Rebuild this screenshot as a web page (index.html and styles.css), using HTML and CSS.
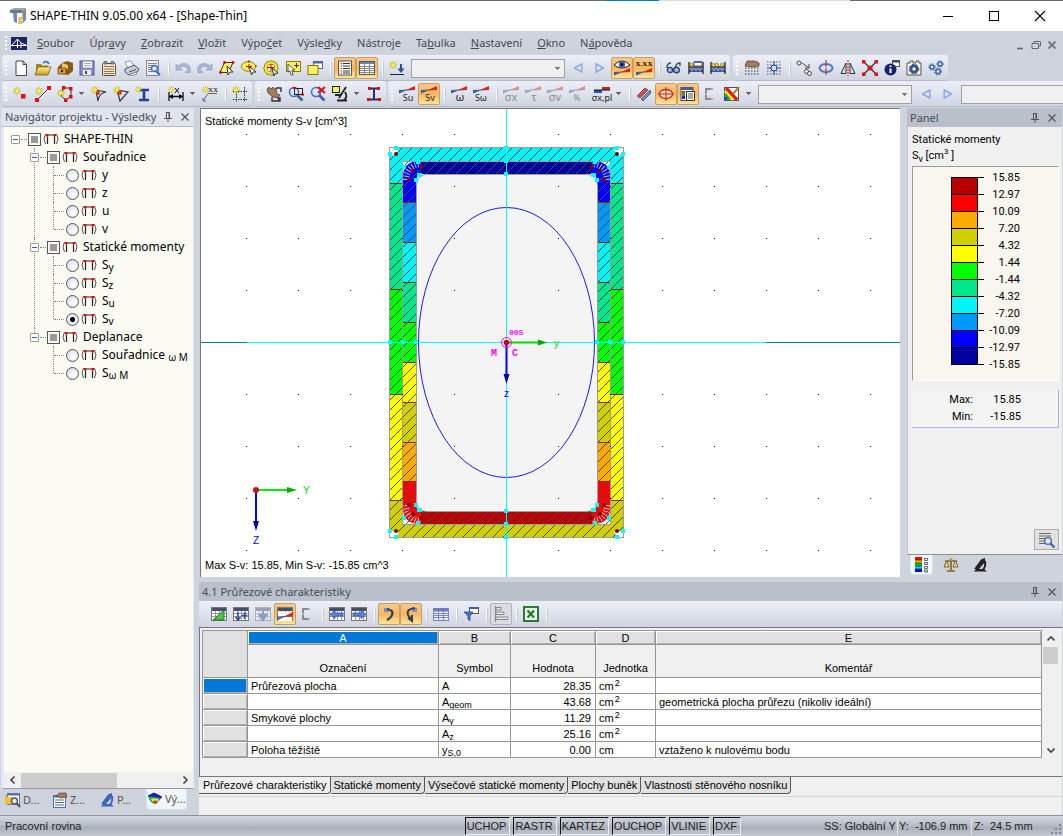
FILE: index.html
```html
<!DOCTYPE html>
<html lang="cs">
<head>
<meta charset="utf-8">
<title>SHAPE-THIN 9.05.00 x64 - [Shape-Thin]</title>
<link rel="stylesheet" href="styles.css">
</head>
<body>
<svg class="sprite" aria-hidden="true">
  <defs>
    <linearGradient id="gFold" x1="0" x2="0" y1="0" y2="1"><stop offset="0" stop-color="#fff29a"/><stop offset="1" stop-color="#c79a1e"/></linearGradient>
  </defs>
  <symbol id="star" viewBox="0 0 8 8"><path d="M4 0V8M0 4H8M1 1L7 7M7 1L1 7" stroke="#c8b400" stroke-width="1"/><circle cx="4" cy="4" r="1.8" fill="#fff645"/></symbol>
  <symbol id="wedge" viewBox="0 0 16 8" preserveAspectRatio="none"><path d="M0 4.500L16 3.500" stroke="#555"/><path d="M0 7.500V5L8 4.200Z" fill="#2a5cc0"/><path d="M7 4L16 0V4Z" fill="#d4281c"/></symbol>
  <symbol id="sect" viewBox="0 0 16 12"><path d="M2.500 1Q-.5 6 2.500 11M13.500 1Q16.500 6 13.500 11" fill="none" stroke="#555"/><path d="M4.500 11V3.500M11.500 11V3.500M5 2H11" fill="none" stroke="#222" stroke-width="1.200"/><rect x="3" y="1" width="2.400" height="2.400" fill="#e00"/><rect x="10.600" y="1" width="2.400" height="2.400" fill="#e00"/></symbol>
  <symbol id="lens" viewBox="0 0 16 16"><path d="M9 9L14.500 14.500" stroke="#3c5fa8" stroke-width="2.600"/><circle cx="6" cy="6" r="4.500" fill="#dbe8fb" stroke="#4a6fb8" stroke-width="1.600"/></symbol>
  <symbol id="sheet" viewBox="0 0 16 16"><rect x=".5" y="1.500" width="15" height="13" fill="#fff" stroke="#777"/><path d="M1 3.500H15" stroke="#46506c" stroke-width="3"/><path d="M1 7.500H15M1 10.500H15M4.500 5V14M8.500 5V14M12.500 5V14" stroke="#999"/></symbol>
  <symbol id="prev" viewBox="0 0 16 16"><path d="M12 3.500V12.500L4 8Z" fill="#a9c0ee" stroke="#7d9ce0"/><path d="M11 6V10L7 8Z" fill="#e6eefc"/></symbol>
  <symbol id="next" viewBox="0 0 16 16"><path d="M4 3.500V12.500L12 8Z" fill="#a9c0ee" stroke="#7d9ce0"/><path d="M5 6V10L9 8Z" fill="#e6eefc"/></symbol>
  <symbol id="pin" viewBox="0 0 8 10"><path d="M2.500 1V6M5.500 1V6M2 .5H6M0 6.500H8M4 7V10" fill="none" stroke="#555"/><path d="M5 1V6" stroke="#555"/></symbol>
  <symbol id="cross" viewBox="0 0 10 10"><path d="M1.500 1.500L8.500 8.500M8.500 1.500L1.500 8.500" stroke="#555" stroke-width="1.200"/></symbol>
  <symbol id="abacus" viewBox="0 0 16 16"><path d="M1 2V14M15 2V14M1 7H15M1 11H15" stroke="#222" stroke-width="1.300"/><g fill="#e7cf57" stroke="#826c1c" stroke-width=".6"><circle cx="3.500" cy="5" r="1.700"/><circle cx="7" cy="5" r="1.700"/><circle cx="12" cy="5" r="1.700"/></g><g fill="#7a97d6" stroke="#24458c" stroke-width=".6"><circle cx="4" cy="10" r="1.800"/><circle cx="8" cy="10" r="1.800"/><circle cx="12" cy="10" r="1.800"/></g></symbol>
  <symbol id="scope" viewBox="0 0 16 16"><path d="M2 14.500H15L12 12H4Z"/><path d="M2 12L9 2.500L13 1V5L7 12Z"/><path d="M13 4Q14 9 11 13" fill="none" stroke="currentColor" stroke-width="2"/></symbol>
  <symbol id="brac" viewBox="0 0 16 16"><path d="M11 3H4V13H11" fill="none" stroke="#8b8b8b" stroke-width="2"/><path d="M9 3H11M9 13H11M4 7V9" stroke="#d8dbe4" stroke-width="1"/></symbol>
</svg>

<header class="titlebar">
  <svg class="app-icon" viewBox="0 0 18 18"><path d="M1 3L5 1H17L13 4V6H1Z" fill="#9fa6ae"/><path d="M1 3H13V6H1Z" fill="#6f7780"/><path d="M4 6H8V16L5 15Z" fill="#7088c0"/><path d="M13 4L17 1V13L14 16Z" fill="#858c94"/><text x="9" y="15" class="icon-g">g</text></svg>
  <h1>SHAPE-THIN 9.05.00 x64 - [Shape-Thin]</h1>
  <div class="winbtns">
    <button aria-label="Minimalizovat"><svg viewBox="0 0 12 12"><path d="M1 6.500H11" stroke="#000"/></svg></button>
    <button aria-label="Maximalizovat"><svg viewBox="0 0 12 12"><rect x="1.500" y="1.500" width="9" height="9" fill="none" stroke="#000"/></svg></button>
    <button aria-label="Zavřít"><svg viewBox="0 0 12 12"><path d="M1 1L11 11M11 1L1 11" stroke="#000" stroke-width="1.100"/></svg></button>
  </div>
</header>

<nav class="menubar">
  <span class="grip"></span>
  <svg class="bridge" viewBox="0 0 16 13"><rect width="16" height="13" fill="#1b2560"/><path d="M0 8.500H16M6.500 2V11M6.500 2L1 8M6.500 2L10 6V11M10 6L15 8" stroke="#fff" fill="none"/></svg>
  <div class="menus">
    <button><u>S</u>oubor</button><button>Úpr<u>a</u>vy</button><button><u>Z</u>obrazit</button><button><u>V</u>ložit</button><button>Výpo<u>č</u>et</button><button>Výsle<u>d</u>ky</button><button>Nástro<u>j</u>e</button><button>Ta<u>b</u>ulka</button><button><u>N</u>astavení</button><button><u>O</u>kno</button><button>N<u>á</u>pověda</button>
  </div>
  <div class="mdi">
    <button aria-label="Minimalizovat okno"><svg viewBox="0 0 10 10"><path d="M2 8.500H8" stroke="#666" stroke-width="1.600"/></svg></button>
    <button aria-label="Obnovit okno"><svg viewBox="0 0 10 10"><path d="M3 3V1.500H9.500V6H8M1 3.500H7.500V8.500H1Z" fill="none" stroke="#666"/></svg></button>
    <button aria-label="Zavřít okno"><svg viewBox="0 0 10 10"><path d="M1.500 1.500L8.500 8.500M8.500 1.500L1.500 8.500" stroke="#777" stroke-width="1.800"/></svg></button>
  </div>
</nav>

<div class="toolrow">
  <div class="toolbar">
    <span class="grip"></span>
    <button class="tb" aria-label="Nový"><svg viewBox="0 0 16 16"><path d="M3 1H10L13.500 4.500V15.500H3Z" fill="#fff" stroke="#444"/><path d="M10 1V4.500H13.500" fill="none" stroke="#444"/></svg></button>
    <button class="tb" aria-label="Otevřít"><svg viewBox="0 0 16 16"><path d="M1 4H6L7 5.500H13V14H1Z" fill="#a98618"/><path d="M3 7H16L13 15H0Z" fill="url(#gFold)" stroke="#6b540e" stroke-width=".7"/><path d="M8 3Q12 0 14 4" fill="none" stroke="#4a7bc0" stroke-width="1.800"/></svg></button>
    <button class="tb" aria-label="Správce"><svg viewBox="0 0 16 16"><path d="M5 3L10 1L16 3V11L11 15L1 13V7Z" fill="#8a5a14"/><path d="M5 3L11 5V9H5Z" fill="#f3c76a"/><path d="M1 8H9V14H1Z" fill="#dc9d35" stroke="#54350a" stroke-width=".7"/><circle cx="5" cy="11" r="1.200" fill="#222"/></svg></button>
    <button class="tb" aria-label="Uložit"><svg viewBox="0 0 16 16"><rect x="1" y="1" width="14" height="14" fill="#8c8ccf" stroke="#50508c"/><rect x="4" y="1.500" width="9" height="6" fill="#fff"/><path d="M5 3.500H12M5 5.500H12" stroke="#aaa"/><rect x="4" y="10" width="8" height="5" fill="#eee"/><rect x="6" y="11" width="2" height="3" fill="#446"/></svg></button>
    <button class="tb" aria-label="Protokol"><svg viewBox="0 0 16 16"><rect x="1.500" y="3.500" width="13" height="12" rx="1" fill="#f5e3c8" stroke="#5a4c3a"/><path d="M3 1.500H6V4H3ZM10 1.500H13V4H10Z" fill="#999" stroke="#444" stroke-width=".6"/><path d="M3 6.500H13M3 9H13M3 11.500H13M3 13.500H13" stroke="#8d7458"/></svg></button>
    <button class="tb" aria-label="Tisk"><svg viewBox="0 0 16 16"><path d="M2 2L8 1L11 6L5 8Z" fill="#fff" stroke="#777" stroke-width=".7"/><path d="M2 9L11 5L16 9L14 12L6 15L2 12Z" fill="#c9ccdc" stroke="#333" stroke-width=".8"/><path d="M6 12L13 9.500" stroke="#555"/><path d="M7 14.500L13 12L14 14L9 15.500Z" fill="#fff" stroke="#555" stroke-width=".6"/></svg></button>
    <button class="tb" aria-label="Náhled"><svg viewBox="0 0 16 16"><rect x="1.500" y=".5" width="12" height="15" fill="#eceef4" stroke="#888"/><path d="M3 3.500H12M3 5.500H8M3 7.500H6M3 9.500H6M3 11.500H7" stroke="#888"/><path d="M11.500 11.500L15 15" stroke="#3d69b6" stroke-width="2"/><circle cx="9.500" cy="8.500" r="3" fill="#d8e8fb" stroke="#3d69b6" stroke-width="1.300"/></svg></button>
    <span class="sep"></span>
    <button class="tb" aria-label="Zpět"><svg viewBox="0 0 16 16"><path d="M1 4V10H7L4.500 8Q9 4 13 9Q12 12 10 12.500H15Q17 4 9 3.500Q5 3.500 3 6Z" fill="#a9b8d8" stroke="#8094c0" stroke-width=".6"/></svg></button>
    <button class="tb" aria-label="Znovu"><svg viewBox="0 0 16 16"><path d="M15 4V10H9L11.500 8Q7 4 3 9Q4 12 6 12.500H1Q-1 4 7 3.500Q11 3.500 13 6Z" fill="#a9b8d8" stroke="#8094c0" stroke-width=".6"/></svg></button>
    <button class="tb" aria-label="Výběr rovnoběžníkem"><svg viewBox="0 0 16 16"><path d="M5.500 2.500H14L9.500 12.500H1Z" fill="#fcf25c" stroke="#333"/><path d="M8 6L14 12L11 12L9 15Z" fill="#fff" stroke="#333"/><g fill="#d00"><circle cx="5.500" cy="2.500" r="1.400"/><circle cx="14" cy="2.500" r="1.400"/><circle cx="1.500" cy="12.500" r="1.400"/></g></svg></button>
    <button class="tb" aria-label="Výběr elipsou"><svg viewBox="0 0 16 16"><ellipse cx="7.500" cy="6.500" rx="7" ry="4.800" fill="#fcf25c" stroke="#8a7a00"/><path d="M8 6L15 12L12 12L10.500 15Z" fill="#fff" stroke="#333"/><path d="M8 0V3M8 4V9M5 6.500H11M14 6H16" stroke="#c00"/></svg></button>
    <button class="tb" aria-label="Výběr prstencem"><svg viewBox="0 0 16 16"><circle cx="8" cy="8" r="5.500" fill="#fff" stroke="#7a6d00" stroke-width="4"/><circle cx="8" cy="8" r="5.500" fill="none" stroke="#fbe82c" stroke-width="2.600"/><path d="M8 4V11M4.500 7.500H11" stroke="#c00"/><path d="M9 8L15 13L12 13.500L11 16Z" fill="#fff" stroke="#333"/></svg></button>
    <button class="tb" aria-label="Přidat k výběru"><svg viewBox="0 0 16 16"><rect x="1.500" y="1.500" width="14" height="10" fill="#fcf25c" stroke="#8a7a00"/><path d="M9 5.500H14M11.500 3V8" stroke="#333"/><path d="M3 4L10 10H7L8 15L6 15L5 11L3 12Z" fill="#fff" stroke="#333" stroke-width=".8"/></svg></button>
    <button class="tb" aria-label="Okno výběru"><svg viewBox="0 0 16 16"><rect x="6.500" y="1.500" width="9" height="7" fill="#fff" stroke="#667"/><path d="M6 2.500H16" stroke="#4a67a8" stroke-width="2"/><rect x="1" y="5.500" width="10" height="9" fill="#fcf25c" stroke="#8a7a00"/></svg></button>
    <span class="sep"></span>
    <button class="tb on" aria-label="Navigátor"><svg viewBox="0 0 16 16"><rect x="1.500" y="1" width="13" height="14" fill="#fff" stroke="#555"/><path d="M3.500 3.500H5M3.500 6H5M3.500 8.500H5M3.500 11H5M3.500 13H5" stroke="#c33"/><path d="M6 3.500H13M6 6H13M6 8.500H13M6 11H13M6 13H13" stroke="#333"/></svg></button>
    <button class="tb on" aria-label="Tabulky"><svg viewBox="0 0 16 16"><rect x=".5" y="1.500" width="15" height="13" fill="#fff" stroke="#555"/><path d="M1 3H15" stroke="#6c83b8" stroke-width="2"/><path d="M1 6.500H15M1 8.500H15M1 10.500H15M1 12.500H15M5.500 4V14M10.500 4V14" stroke="#888"/></svg></button>
    <span class="sep"></span>
    <button class="tb" aria-label="Zatížení"><svg viewBox="0 0 16 16"><use href="#star" x="0" y="1" width="8" height="8"/><path d="M12 4V11" stroke="#2d4f9e" stroke-width="2"/><path d="M8.500 8.500L12 13L15.500 8.500Z" fill="#2d4f9e"/><path d="M1 14.500H15" stroke="#222"/></svg></button>
    <select class="combo c1" aria-label="Zatěžovací stav"><option></option></select>
    <button class="tb" aria-label="Předchozí"><svg><use href="#prev"/></svg></button>
    <button class="tb" aria-label="Další"><svg><use href="#next"/></svg></button>
    <button class="tb on" aria-label="Zobrazit výsledky"><svg viewBox="0 0 16 16"><use href="#wedge" x="0" y="8" width="16" height="8"/><path d="M0 5Q8 -3 16 5Q8 11 0 5Z" fill="#fff" stroke="#222"/><circle cx="8" cy="4.500" r="3.200" fill="#3463b4"/><circle cx="8" cy="4.500" r="1.300"/></svg></button>
    <button class="tb on" aria-label="Zobrazit hodnoty"><svg viewBox="0 0 16 16"><text x="8" y="6" class="xxx">X.XX</text><use href="#wedge" x="0" y="8" width="16" height="8"/></svg></button>
    <span class="sep"></span>
    <button class="tb" aria-label="Brýle"><svg viewBox="0 0 16 16"><path d="M1 8Q1 3 5 3M9 8Q10 3 14 3V6" fill="none" stroke="#355" stroke-width="1.400"/><circle cx="4" cy="10" r="2.600" fill="#a9bde6" stroke="#2c3e70" stroke-width="1.400"/><circle cx="10.500" cy="10" r="2.800" fill="#a9bde6" stroke="#2c3e70" stroke-width="1.400"/></svg></button>
    <button class="tb" aria-label="Výpočet po oknech"><svg><use href="#abacus"/><path d="M6 1.500H14V6H6Z" fill="#fff" stroke="#555"/><path d="M6 2H14" stroke="#4a67a8" stroke-width="2"/></svg></button>
    <button class="tb" aria-label="Spočítat"><svg><use href="#abacus"/></svg></button>
  </div>
  <div class="toolbar">
    <span class="grip"></span>
    <button class="tb" aria-label="Rastr"><svg viewBox="0 0 16 16"><path d="M1 5H15M1 8H15M1 11H15M1 14H15" stroke="#333" stroke-dasharray="1.500 1.500"/><path d="M1 6L3 1H11L15 3V6L10 7Z" fill="#a77b5c" stroke="#4f3423" stroke-width=".7"/></svg></button>
    <button class="tb" aria-label="Uchopení"><svg viewBox="0 0 16 16"><path d="M1 2H15M1 5H15M1 11H15M1 14H15" stroke="#555" stroke-dasharray="1.500 1.500"/><path d="M8 1V15M1 8H15" stroke="#2038b0"/><circle cx="8" cy="8" r="3" fill="#cfe0ff" stroke="#2038b0"/></svg></button>
    <span class="sep"></span>
    <button class="tb" aria-label="Posun"><svg viewBox="0 0 16 16"><circle cx="3" cy="3" r="2" fill="#fff" stroke="#444"/><path d="M6 3L13 8M13 4V8H9" fill="none" stroke="#444"/><circle cx="10.500" cy="11.500" r="2" fill="#fff" stroke="#444"/><circle cx="13.500" cy="13.500" r="2" fill="#fff" stroke="#444"/></svg></button>
    <button class="tb" aria-label="Otočení"><svg viewBox="0 0 16 16"><ellipse cx="8" cy="8" rx="6.500" ry="4" fill="none" stroke="#5278c4" stroke-width="2"/><path d="M8 0V16" stroke="#c00" stroke-dasharray="3 1"/></svg></button>
    <button class="tb" aria-label="Zrcadlení"><svg viewBox="0 0 16 16"><path d="M6 3V13.500H1ZM10 3V13.500H15Z" fill="#ddd" stroke="#333"/><path d="M8 0V16" stroke="#c00" stroke-dasharray="2 1"/></svg></button>
    <button class="tb" aria-label="Průsečík"><svg viewBox="0 0 16 16"><path d="M2 2L14 14M14 2L2 14" stroke="#333" stroke-width="1.400"/><g fill="#d8141c"><rect x="0" y="0" width="3.500" height="3.500"/><rect x="12.500" y="0" width="3.500" height="3.500"/><rect x="0" y="12.500" width="3.500" height="3.500"/><rect x="12.500" y="12.500" width="3.500" height="3.500"/><circle cx="8" cy="8" r="2.600"/></g></svg></button>
    <button class="tb" aria-label="Informace"><svg viewBox="0 0 16 16"><rect x="8.500" y=".5" width="7" height="6" fill="#fff" stroke="#556"/><path d="M8 1.500H16" stroke="#445" stroke-width="2"/><circle cx="6.500" cy="9.500" r="6" fill="#19216e"/><path d="M6.500 5.500V7M6.500 8.500V13" stroke="#fff" stroke-width="2"/></svg></button>
    <button class="tb" aria-label="Nastavení zobrazení"><svg viewBox="0 0 16 16"><path d="M1 3H4V1H7V3H10V1H13V3H15V15H1Z" fill="#fbf3e4" stroke="#554"/><circle cx="8" cy="9" r="3.200" fill="none" stroke="#34558f" stroke-width="3"/><circle cx="8" cy="9" r="4.800" fill="none" stroke="#34558f" stroke-dasharray="2 2"/></svg></button>
    <button class="tb" aria-label="Možnosti"><svg viewBox="0 0 16 16"><g fill="#dfe9fb" stroke="#41639f" stroke-width="1.500"><circle cx="4" cy="7" r="2"/><circle cx="12" cy="4" r="2"/><circle cx="10" cy="11.500" r="2.200"/></g><g fill="none" stroke="#41639f" stroke-dasharray="1.500 1.500"><circle cx="4" cy="7" r="3.300"/><circle cx="12" cy="4" r="3.200"/><circle cx="10" cy="11.500" r="3.600"/></g></svg></button>
  </div>
</div>

<div class="toolrow">
  <div class="toolbar">
    <span class="grip"></span>
    <button class="tb" aria-label="Nový uzel"><svg viewBox="0 0 16 16"><use href="#star" x="0" y="1" width="8" height="8"/><rect x="8" y="8" width="4.500" height="4.500" fill="#e01010"/></svg></button>
    <button class="tb" aria-label="Nová linie"><svg viewBox="0 0 16 16"><path d="M2 14L14 2" stroke="#333"/><rect x="0" y="12" width="4" height="4" fill="#e01010"/><rect x="12" y="0" width="4" height="4" fill="#e01010"/><use href="#star" x="0" y="1" width="8" height="8"/></svg></button>
    <button class="tb" aria-label="Nový prvek"><svg viewBox="0 0 16 16"><path d="M6 2H14V10L9 14L4 10Z" fill="none" stroke="#333"/><g fill="#e01010"><rect x="5" y="0" width="3.500" height="3.500"/><rect x="12" y="1" width="3.500" height="3.500"/><rect x="12" y="9" width="3.500" height="3.500"/><rect x="7" y="12.500" width="3.500" height="3.500"/></g><use href="#star" x="0" y="3" width="8" height="8"/></svg></button>
    <span class="dd"></span>
    <button class="tb" aria-label="Zaoblení"><svg viewBox="0 0 16 16"><path d="M5 4L15 6Q8 7 7 15Z" fill="none" stroke="#333" stroke-width="1.200"/><rect x="5" y="5" width="3.500" height="3.500" fill="#e01010"/><use href="#star" x="0" y="0" width="8" height="8"/></svg></button>
    <button class="tb" aria-label="Zkosení"><svg viewBox="0 0 16 16"><path d="M4 4L15 6L7 15Z" fill="none" stroke="#333" stroke-width="1.200"/><rect x="5" y="5" width="3.500" height="3.500" fill="#e01010"/><use href="#star" x="0" y="0" width="8" height="8"/></svg></button>
    <button class="tb" aria-label="Nový průřez"><svg viewBox="0 0 16 16"><path d="M4 4H14M4 14H14M9 4V14" stroke="#1d3f9e" stroke-width="2.600"/><use href="#star" x="0" y="0" width="7" height="7"/></svg></button>
    <span class="sep"></span>
    <button class="tb gap" aria-label="Kóty"><svg viewBox="0 0 16 16"><path d="M1 6V15M15 6V15M1 10.500H15" stroke="#111" stroke-width="1.300"/><path d="M1 10.500L5 8V13ZM15 10.500L11 8V13Z"/><path d="M7 2L11 7M11 2L7 7" stroke="#111"/><use href="#star" x="0" y="0" width="7" height="7"/></svg></button>
    <span class="dd"></span>
    <button class="tb" aria-label="Komentář"><svg viewBox="0 0 16 16"><path d="M15 7.500H6L1 15M1 12V15H4" fill="none" stroke="#666"/><text x="11" y="6" class="xx">XX</text><use href="#star" x="0" y="0" width="7" height="7"/></svg></button>
    <span class="sep"></span>
    <button class="tb" aria-label="Pomocná síť"><svg viewBox="0 0 16 16"><path d="M4.500 3V16M12.500 1V16M1 5.500H16M1 13.500H16" stroke="#333" stroke-dasharray="1.500 1"/><use href="#star" x="0" y="0" width="8" height="8"/></svg></button>
  </div>
  <div class="toolbar">
    <span class="grip"></span>
    <button class="tb" aria-label="Posunout pohled"><svg viewBox="0 0 16 16"><path d="M10 2H15V6M6 11V15H14V11M10 9L14 15" fill="none" stroke="#333" stroke-width="1.400"/><path d="M1 3L3 1L5 3L7 1L8 3L10 2L11 8L14 9L12 12L7 11L2 7Z" fill="#a27b60" stroke="#4b3526" stroke-width=".7"/></svg></button>
    <button class="tb" aria-label="Zvětšit oknem"><svg viewBox="0 0 16 16"><use href="#lens" width="16" height="16"/><rect x="6.500" y="2.500" width="8" height="6" fill="none" stroke="#222"/><path d="M5 2H8M13 8.500H16" stroke="#c00" stroke-width="2"/></svg></button>
    <button class="tb" aria-label="Původní pohled"><svg viewBox="0 0 16 16"><use href="#lens" width="16" height="16"/><path d="M8 1L15 7M15 1L8 7" stroke="#d01818" stroke-width="2.200"/></svg></button>
    <button class="tb" aria-label="Vykreslení"><svg viewBox="0 0 16 16"><rect x=".5" y=".5" width="7" height="6" fill="#fff34d" stroke="#222"/><path d="M14 1L7 12M3 9H9M5 14.500H15M13 6Q16 11 12 14" fill="none" stroke="#222" stroke-width="1.800"/></svg></button>
    <span class="dd"></span>
    <button class="tb" aria-label="Profil"><svg viewBox="0 0 16 16"><path d="M3 2.500H13M3 13.500H13M8 3V13" stroke="#26306e" stroke-width="2"/><g fill="#e01010"><rect x="2" y="1" width="3" height="3"/><rect x="11" y="1" width="3" height="3"/><rect x="1" y="12" width="3" height="3"/><rect x="12" y="12" width="3" height="3"/></g></svg></button>
  </div>
  <div class="toolbar grow">
    <span class="grip"></span>
    <button class="tb" aria-label="Su"><svg viewBox="0 0 16 16"><use href="#wedge" width="16" height="8"/><text x="9" y="15" class="sub">Su</text></svg></button>
    <button class="tb on" aria-label="Sv"><svg viewBox="0 0 16 16"><use href="#wedge" width="16" height="8"/><text x="9" y="15" class="sub">Sv</text></svg></button>
    <span class="sep"></span>
    <button class="tb" aria-label="ω"><svg viewBox="0 0 16 16"><use href="#wedge" width="16" height="8"/><text x="9" y="15" class="sub big">ω</text></svg></button>
    <button class="tb" aria-label="Sω"><svg viewBox="0 0 16 16"><use href="#wedge" width="16" height="8"/><text x="8" y="15" class="sub">Sω</text></svg></button>
    <span class="sep"></span>
    <button class="tb off" aria-label="σx"><svg viewBox="0 0 16 16"><use href="#wedge" width="16" height="8"/><text x="8" y="15" class="sub big">σx</text></svg></button>
    <button class="tb off" aria-label="τ"><svg viewBox="0 0 16 16"><use href="#wedge" width="16" height="8"/><text x="9" y="15" class="sub big">τ</text></svg></button>
    <button class="tb off" aria-label="σv"><svg viewBox="0 0 16 16"><use href="#wedge" width="16" height="8"/><text x="8" y="15" class="sub big">σv</text></svg></button>
    <button class="tb off" aria-label="%"><svg viewBox="0 0 16 16"><use href="#wedge" width="16" height="8"/><text x="8" y="15" class="sub">%</text></svg></button>
    <button class="tb gap" aria-label="σx,pl"><svg viewBox="0 0 16 16"><path d="M0 4H8V7H0Z" fill="#2a4fae"/><path d="M8 1H16V4H8Z" fill="#c4281c"/><path d="M0 4H16" stroke="#111"/><text x="8" y="15" class="sub">σx,pl</text></svg></button>
    <span class="dd"></span>
    <span class="sep"></span>
    <button class="tb" aria-label="Prvky"><svg viewBox="0 0 16 16"><path d="M1 10L9 2L12 4L4 12Z" fill="#d94a4a" stroke="#444" stroke-width=".7"/><path d="M5 13L14 4L15 7L7 15Z" fill="#6f8fc4" stroke="#444" stroke-width=".7"/></svg></button>
    <button class="tb on" aria-label="Jádro"><svg viewBox="0 0 16 16"><ellipse cx="8" cy="8" rx="6.500" ry="4.500" fill="#fbe3b4" stroke="#c22" stroke-width="1.300"/><path d="M8 1V15M0 8H16" stroke="#c22"/></svg></button>
    <button class="tb on" aria-label="Ovládací panel"><svg viewBox="0 0 16 16"><rect x="1" y="1.500" width="12" height="13" fill="#fff" stroke="#446"/><path d="M1 2.500H13" stroke="#445c94" stroke-width="3"/><path d="M3.500 5V7" stroke="#d22" stroke-width="3"/><path d="M3.500 7V10" stroke="#2a2" stroke-width="3"/><path d="M3.500 10V13" stroke="#22d" stroke-width="3"/><rect x="6.500" y="5.500" width="8" height="9" fill="#fff" stroke="#333"/><path d="M8 8H13M8 10H13M8 12H13" stroke="#555"/></svg></button>
    <button class="tb" aria-label="Obrys"><svg><use href="#brac"/></svg></button>
    <button class="tb" aria-label="Barvy"><svg viewBox="0 0 16 16"><rect x=".5" y="1.500" width="14" height="13" fill="#fff" stroke="#555"/><path d="M2 2L13 14" stroke="#e02020" stroke-width="3.500"/><path d="M1 5L9 14" stroke="#f6e820" stroke-width="2.600"/><path d="M1 8L6 14" stroke="#20b020" stroke-width="2.600"/><path d="M1 11L3 14" stroke="#2038d8" stroke-width="2.600"/><path d="M15 1L9 8" stroke="#a88028" stroke-width="2"/></svg></button>
    <span class="dd"></span>
    <select class="combo c2" aria-label="Pohled"><option></option></select>
    <button class="tb" aria-label="Předchozí pohled"><svg><use href="#prev"/></svg></button>
    <button class="tb" aria-label="Další pohled"><svg><use href="#next"/></svg></button>
    <select class="combo c3" aria-label="Viditelnost"><option></option></select>
  </div>
</div>

<main class="work">
  <aside class="navigator">
    <div class="caption light"><h2>Navigátor projektu - Výsledky</h2><button aria-label="Připnout"><svg class="i-pin"><use href="#pin"/></svg></button><button aria-label="Zavřít"><svg class="i-x"><use href="#cross"/></svg></button></div>
    <div class="treebox">
      <ul class="tree">
        <li><div class="node"><button class="exp" aria-label="Sbalit"></button><label><input type="checkbox"><svg><use href="#sect"/></svg>SHAPE-THIN</label></div>
          <ul>
            <li><div class="node"><button class="exp" aria-label="Sbalit"></button><label><input type="checkbox"><svg><use href="#sect"/></svg>Souřadnice</label></div>
              <ul class="leaves">
                <li><div class="node"><label><input type="radio" name="res"><svg><use href="#sect"/></svg>y</label></div></li>
                <li><div class="node"><label><input type="radio" name="res"><svg><use href="#sect"/></svg>z</label></div></li>
                <li><div class="node"><label><input type="radio" name="res"><svg><use href="#sect"/></svg>u</label></div></li>
                <li><div class="node"><label><input type="radio" name="res"><svg><use href="#sect"/></svg>v</label></div></li>
              </ul></li>
            <li><div class="node"><button class="exp" aria-label="Sbalit"></button><label><input type="checkbox"><svg><use href="#sect"/></svg>Statické momenty</label></div>
              <ul class="leaves">
                <li><div class="node"><label><input type="radio" name="res"><svg><use href="#sect"/></svg><span>S<sub>y</sub></span></label></div></li>
                <li><div class="node"><label><input type="radio" name="res"><svg><use href="#sect"/></svg><span>S<sub>z</sub></span></label></div></li>
                <li><div class="node"><label><input type="radio" name="res"><svg><use href="#sect"/></svg><span>S<sub>u</sub></span></label></div></li>
                <li><div class="node"><label><input type="radio" name="res" checked><svg><use href="#sect"/></svg><span>S<sub>v</sub></span></label></div></li>
              </ul></li>
            <li><div class="node"><button class="exp" aria-label="Sbalit"></button><label><input type="checkbox"><svg><use href="#sect"/></svg>Deplanace</label></div>
              <ul class="leaves">
                <li><div class="node"><label><input type="radio" name="res"><svg><use href="#sect"/></svg><span>Souřadnice <sub>ω M</sub></span></label></div></li>
                <li><div class="node"><label><input type="radio" name="res"><svg><use href="#sect"/></svg><span>S<sub>ω M</sub></span></label></div></li>
              </ul></li>
          </ul></li>
      </ul>
      <div class="hscroll"><button aria-label="Vlevo"><svg viewBox="0 0 8 8"><path d="M5.500 .5L2 4L5.500 7.500" fill="none" stroke="#444" stroke-width="1.600"/></svg></button><span class="track"><span class="thumb"></span></span><button aria-label="Vpravo"><svg viewBox="0 0 8 8"><path d="M2.500 .5L6 4L2.500 7.500" fill="none" stroke="#444" stroke-width="1.600"/></svg></button></div>
    </div>
    <div class="navtabs">
      <button><svg viewBox="0 0 16 16"><path d="M0 3H5V12H0Z" fill="#f0c428"/><rect x="2.500" y="1.500" width="12" height="11" fill="#fff" stroke="#667aa8"/><path d="M2 2.500H15" stroke="#4a6fc8" stroke-width="2"/><path d="M1 5H8V12H1Z" fill="#f0c428"/><circle cx="9.500" cy="9" r="3" fill="#dce9fb" stroke="#555" stroke-width="1.400"/><path d="M12 11.500L15 15" stroke="#555" stroke-width="2"/></svg>D...</button>
      <button><svg viewBox="0 0 16 16"><rect x="1.500" y="3.500" width="12" height="12" fill="#fff" stroke="#4a6fc8"/><path d="M1 4.500H14" stroke="#4a6fc8" stroke-width="2"/><path d="M3 8H12M3 10.500H12M3 13H12" stroke="#567"/><path d="M4 4L7 1L14 1L15 5L9 6Z" fill="#a47a5c" stroke="#523a29" stroke-width=".6"/></svg>Z...</button>
      <button><svg class="scope-blue"><use href="#scope"/></svg>P...</button>
      <button class="active"><svg viewBox="0 0 16 16"><path d="M1 5L7 2L15 6L9 13Q3 12 1 5Z" fill="#1c1ce0"/><path d="M1.500 5.500L13 7L9 13Q4 11 2 7Z" fill="#16c83c"/><path d="M4 8Q8 7 12 8.500L9 12.500Q5 11 4 8Z" fill="#f6ea20"/><path d="M6 10Q9 9 10.500 10.500L9 12.800Q7 12 6 10Z" fill="#e82020"/><path d="M1 5L7 2L15 6" fill="none" stroke="#222"/></svg>Vý...</button>
    </div>
  </aside>

  <section class="canvas">
    <svg class="drawing" aria-label="Průřez">
      <defs>
        <pattern id="grid" x="506" y="342" width="52" height="52" patternUnits="userSpaceOnUse"><rect width="1" height="1" fill="#000"/></pattern>
        <pattern id="hatch" width="10" height="10" patternUnits="userSpaceOnUse"><path d="M-1 11L11 -1M-1 1L1 -1M9 11L11 9" stroke="#4a4a4a" stroke-width="1"/></pattern>
        <g id="corner">
          <path d="M403 203V177Q403 161 420 161H421V174Q416 174 416 184V203Z" fill="#00f"/>
          <path d="M406 180Q407 165 421 164" fill="none" stroke="#fff" stroke-width="6" stroke-dasharray="1 2" opacity=".75"/>
        </g>
        <g id="marks">
          <g fill="#0ff"><rect x="388" y="152" width="4" height="4"/><rect x="394" y="146" width="4" height="4"/><rect x="416" y="160" width="4" height="4"/><rect x="402" y="165" width="4" height="4"/><rect x="417" y="173" width="5" height="4"/><rect x="414" y="178" width="4" height="4"/></g>
          <g fill="#800000"><circle cx="396" cy="154" r="2"/><circle cx="421.500" cy="167" r="2"/><circle cx="413" cy="171" r="2"/><circle cx="409" cy="180" r="2"/></g>
        </g>
        <g id="handles"><g fill="#0ff"><rect x="388" y="340" width="4" height="4"/><rect x="401" y="340" width="4" height="4"/><rect x="414" y="340" width="4" height="4"/></g></g>
        <g id="side">
          <rect x="389" y="147" width="14" height="37" fill="#00f5f5"/>
          <rect x="389" y="184" width="14" height="106" fill="#00e68a"/>
          <rect x="389" y="290" width="14" height="105" fill="#00ff00"/>
          <rect x="389" y="395" width="14" height="106" fill="#ffff00"/>
          <rect x="389" y="501" width="14" height="37" fill="#d0d000"/>
          <rect x="403" y="203" width="13" height="40" fill="#0099ff"/>
          <rect x="403" y="243" width="13" height="40" fill="#00f5f5"/>
          <rect x="403" y="283" width="13" height="40" fill="#00e68a"/>
          <rect x="403" y="323" width="13" height="40" fill="#00ff00"/>
          <rect x="403" y="363" width="13" height="40" fill="#ffff00"/>
          <rect x="403" y="403" width="13" height="40" fill="#d0d000"/>
          <rect x="403" y="443" width="13" height="39" fill="#ffaa00"/>
        </g>
        <path id="cuts" d="M389 183.500H403M389 289.500H403M389 394.500H403M389 500.500H403M403 202.500H416M403 242.500H416M403 282.500H416M403 322.500H416M403 362.500H416M403 402.500H416M403 442.500H416M403 481.500H416" stroke="#8a2a10"/>
        <g id="lowcorner">
          <path d="M403 482V508Q403 524 420 524H421V511Q416 511 416 501V482Z" fill="#f00"/>
          <path d="M406 505Q407 520 421 521" fill="none" stroke="#fff" stroke-width="6" stroke-dasharray="1 2" opacity=".75"/>
        </g>
      </defs>
      <g transform="translate(-201 -109)">
        <rect x="403" y="161" width="208" height="363" fill="#fff"/>
        <rect x="416" y="174" width="182" height="337" rx="10" fill="#f4f4f4"/>
        <use href="#side"/><use href="#side" transform="matrix(-1 0 0 1 1013 0)"/>
        <rect x="389" y="147" width="235" height="14" fill="#00f5f5"/>
        <rect x="389" y="524" width="235" height="14" fill="#d0d000"/>
        <rect x="421" y="161" width="171" height="13" fill="#0000a0"/>
        <rect x="421" y="511" width="171" height="13" fill="#b80000"/>
        <use href="#corner"/><use href="#corner" transform="matrix(-1 0 0 1 1013 0)"/>
        <use href="#lowcorner"/><use href="#lowcorner" transform="matrix(-1 0 0 1 1013 0)"/>
        <path fill-rule="evenodd" d="M389 147H624V538H389ZM416 184Q416 174 426 174H588Q598 174 598 184V501Q598 511 588 511H426Q416 511 416 501Z" fill="url(#hatch)"/>
        <path d="M390 148H395L399 150L394 156L390 152ZM623 148H618L614 150L619 156L623 152ZM390 537V531L399 532L396 537ZM623 537V531L614 532L617 537Z" fill="#fff"/>
        <use href="#cuts"/><use href="#cuts" transform="matrix(-1 0 0 1 1013 0)"/>
        <g fill="none" stroke="#9c9c9c"><rect x="389.500" y="147.500" width="234" height="390"/><path d="M402.500 161.500H610.500V524.500H402.500Z"/><rect x="416.500" y="174.500" width="181" height="337" rx="10"/></g>
        <rect x="201" y="109" width="2000" height="1500" fill="url(#grid)"/>
        <ellipse cx="506.500" cy="342.500" rx="88" ry="135" fill="none" stroke="#1a1aef"/>
        <rect x="-2000" y="342" width="6000" height="1" fill="#008080"/>
        <rect x="247" y="342" width="519" height="1" fill="#00ffff"/>
        <rect x="506" y="-2000" width="1" height="6000" fill="#00ffff"/>
        <use href="#marks"/><use href="#marks" transform="matrix(-1 0 0 1 1013 0)"/><use href="#marks" transform="matrix(1 0 0 -1 0 685)"/><use href="#marks" transform="matrix(-1 0 0 -1 1013 685)"/>
        <use href="#handles"/><use href="#handles" transform="matrix(-1 0 0 1 1013 0)"/>
        <g fill="#0ff"><rect x="504" y="146" width="4" height="4"/><rect x="504" y="159" width="4" height="4"/><rect x="504" y="172" width="4" height="4"/><rect x="504" y="509" width="4" height="4"/><rect x="504" y="522" width="4" height="4"/><rect x="504" y="535" width="4" height="4"/></g>
        <path d="M507 342.500H540" stroke="#0d0" stroke-width="2"/><path d="M538 339.500L547 342.500L538 345.500Z" fill="#00a800"/>
        <path d="M506.500 343V376" stroke="#00f" stroke-width="2"/><path d="M503.500 374L506.500 384L509.500 374Z" fill="#0000b0"/>
        <circle cx="506.500" cy="342.500" r="5" fill="none" stroke="#f0f"/><circle cx="506.500" cy="342.500" r="2.800" fill="#c00"/>
        <text x="554" y="347" class="axis green">y</text><text x="504" y="397" class="axis blue">z</text>
        <text x="491" y="356" class="tag">M</text><text x="512" y="356" class="tag">C</text><text x="509" y="335" class="tag small">00S</text>
        <path d="M256 490H288" stroke="#0e0" stroke-width="2"/><path d="M287 487L297 490L287 493Z" fill="#00b000"/>
        <path d="M256 490V522" stroke="#00f" stroke-width="2"/><path d="M253 521L256 531L259 521Z" fill="#0000b0"/><circle cx="256" cy="490" r="3" fill="#c81414"/>
        <text x="303" y="494" class="axis green">Y</text><text x="253" y="544" class="axis blue">Z</text>
      </g>
    </svg>
    <p class="note top">Statické momenty S-v [cm^3]</p>
    <p class="note bottom">Max S-v: 15.85, Min S-v: -15.85 cm^3</p>
  </section>

  <aside class="panel">
    <div class="caption"><h2>Panel</h2><button aria-label="Připnout"><svg class="i-pin"><use href="#pin"/></svg></button><button aria-label="Zavřít"><svg class="i-x"><use href="#cross"/></svg></button></div>
    <div class="panelbody">
      <p>Statické momenty</p>
      <p class="unit">S<sub>v</sub> [cm<sup>3</sup> ]</p>
      <div class="legend">
        <div class="bands"><i class="k1"></i><i class="k2"></i><i class="k3"></i><i class="k4"></i><i class="k5"></i><i class="k6"></i><i class="k7"></i><i class="k8"></i><i class="k9"></i><i class="k10"></i><i class="k11"></i></div>
        <ol class="scale"><li>15.85</li><li>12.97</li><li>10.09</li><li>7.20</li><li>4.32</li><li>1.44</li><li>-1.44</li><li>-4.32</li><li>-7.20</li><li>-10.09</li><li>-12.97</li><li>-15.85</li></ol>
      </div>
      <dl class="extremes"><dt>Max:</dt><dd>15.85</dd><dt>Min:</dt><dd>-15.85</dd></dl>
      <button class="lensbtn" aria-label="Podrobnosti"><svg viewBox="0 0 16 16"><path d="M0 1.500H12M0 4H12M0 6.500H6M0 9H5M0 11.500H6" stroke="#666"/><path d="M11 11L15.500 15.500" stroke="#4468b0" stroke-width="2.400"/><circle cx="9" cy="9" r="3.400" fill="#d9e6fb" stroke="#4468b0" stroke-width="1.400"/></svg></button>
    </div>
    <div class="paneltabs">
      <button class="active" aria-label="Barevná škála"><svg viewBox="0 0 16 16"><path d="M1 1.500H8" stroke="#f00" stroke-width="3"/><path d="M1 4.500H8" stroke="#fa0" stroke-width="3"/><path d="M1 7.500H8" stroke="#0c0" stroke-width="3"/><path d="M1 10.500H8" stroke="#0cf" stroke-width="3"/><path d="M1 13.500H8" stroke="#00e" stroke-width="3"/><path d="M1 3H8M1 6H8M1 9H8M1 12H8" stroke="#222" stroke-width=".7"/><path d="M10.500 1.500H13.500V3.500H10.500ZM10.500 5.500H13.500V7.500H10.500ZM10.500 9.500H13.500V11.500H10.500ZM10.500 13H13.500V15H10.500Z" fill="none" stroke="#666"/></svg></button>
      <button aria-label="Součinitele"><svg viewBox="0 0 16 16"><path d="M8 2V13M2 4H14M4 14H12" stroke="#7b6425" stroke-width="1.600"/><path d="M3 5L1 10H6L4 5M12 5L10 10H15L13 5" fill="#f0dc8c" stroke="#7b6425"/><circle cx="8" cy="2.500" r="1.500" fill="#bd9c38"/></svg></button>
      <button aria-label="Filtr"><svg class="scope-dark"><use href="#scope"/></svg></button>
    </div>
  </aside>

  <section class="tables">
    <div class="caption"><h2>4.1 Průřezové charakteristiky</h2><button aria-label="Připnout"><svg class="i-pin"><use href="#pin"/></svg></button><button aria-label="Zavřít"><svg class="i-x"><use href="#cross"/></svg></button></div>
    <div class="tabletools">
      <button class="tb" aria-label="Vlastnosti"><svg viewBox="0 0 16 16"><use href="#sheet" width="16" height="16"/><path d="M2 14L13 4V14Z" fill="#58c048" stroke="#1e7a18"/></svg></button>
      <button class="tb" aria-label="Vložit řádek"><svg viewBox="0 0 16 16"><use href="#sheet" width="16" height="16"/><path d="M5 6V13M2.500 11L5 14L7.500 11M11.500 6V13M8.500 9.500H14.500" fill="none" stroke="#2c4f9e" stroke-width="1.500"/></svg></button>
      <button class="tb off" aria-label="Výběr v tabulce"><svg viewBox="0 0 16 16"><use href="#sheet" width="16" height="16"/><path d="M8 5V12M4.500 9L8 14L11.500 9Z" fill="#2c4f9e" stroke="#2c4f9e" stroke-width="2"/></svg></button>
      <button class="tb on" aria-label="Výsledky v tabulce"><svg viewBox="0 0 16 16"><use href="#sheet" width="16" height="16"/><path d="M1 6H15V15H1Z" fill="#fff"/><use href="#wedge" x="0" y="6" width="16" height="9"/></svg></button>
      <button class="tb" aria-label="Obrys"><svg><use href="#brac"/></svg></button>
      <span class="sep"></span>
      <button class="tb" aria-label="Předchozí tabulka"><svg viewBox="0 0 16 16"><use href="#sheet" width="16" height="16"/><path d="M1 8.500L6 4.500V7H14V10H6V12.500Z" fill="#5d86d8" stroke="#2c4f9e" stroke-width=".8"/></svg></button>
      <button class="tb" aria-label="Další tabulka"><svg viewBox="0 0 16 16"><use href="#sheet" width="16" height="16"/><path d="M15 8.500L10 4.500V7H2V10H10V12.500Z" fill="#5d86d8" stroke="#2c4f9e" stroke-width=".8"/></svg></button>
      <span class="sep"></span>
      <button class="tb on" aria-label="Synchronizace výběru"><svg viewBox="0 0 16 16"><path d="M3 2H8V6H3Z" fill="#6f8fd0"/><path d="M6 3Q13 4 11 9Q10 12 6 14" fill="none" stroke="#333c58" stroke-width="2.200"/></svg></button>
      <button class="tb on" aria-label="Synchronizace pohledu"><svg viewBox="0 0 16 16"><path d="M9 2H14V6H9Z" fill="#6f8fd0"/><path d="M12 2Q3 3 5 9Q6 12 9 12M9 9V15L5 12" fill="none" stroke="#333c58" stroke-width="2"/></svg></button>
      <span class="sep"></span>
      <button class="tb" aria-label="Tabulka"><svg viewBox="0 0 16 16"><rect x=".5" y="2.500" width="15" height="12" fill="#eef" stroke="#7d86b8"/><path d="M1 4H15" stroke="#6a78c0" stroke-width="3"/><path d="M1 7.500H15M1 9.500H15M1 11.500H15M5.500 5V14M10.500 5V14" stroke="#7d86b8"/></svg></button>
      <span class="sep"></span>
      <button class="tb" aria-label="Filtr"><svg viewBox="0 0 16 16"><rect x="6.500" y="1.500" width="9" height="6" fill="#fff" stroke="#556"/><path d="M6 2H16" stroke="#445c94" stroke-width="2"/><path d="M1 6H10L7 10V15L5 13V10Z" fill="#3f78d0" stroke="#1e3f80" stroke-width=".7"/></svg></button>
      <span class="sep"></span>
      <button class="tb dim" aria-label="Diagram"><svg viewBox="0 0 16 16"><path d="M2.500 0V16" stroke="#888"/><path d="M3 1.500H8V4H3ZM3 6H11V8.500H3ZM3 11H15V13.500H3Z" fill="#e7e7e7" stroke="#888"/></svg></button>
      <span class="sep"></span>
      <button class="tb" aria-label="Excel"><svg viewBox="0 0 16 16"><rect x="1" y="1" width="14" height="14" fill="#e9f6e6" stroke="#1d6a28" stroke-width="1.800"/><path d="M4.500 4.500L11 11.500M11 4.500L4.500 11.500" stroke="#1d7a2c" stroke-width="2.200"/></svg></button>
      <span class="sep"></span>
    </div>
    <div class="sheetarea">
      <table>
        <colgroup><col class="w0"><col class="w1"><col class="w2"><col class="w3"><col class="w4"><col></colgroup>
        <thead>
          <tr class="letters"><th rowspan="2"></th><th class="cur">A</th><th>B</th><th>C</th><th>D</th><th>E</th></tr>
          <tr class="names"><th>Označení</th><th>Symbol</th><th>Hodnota</th><th>Jednotka</th><th>Komentář</th></tr>
        </thead>
        <tbody>
          <tr><th class="cur"></th><td>Průřezová plocha</td><td>A</td><td class="n">28.35</td><td>cm<sup>2</sup></td><td></td></tr>
          <tr><th></th><td></td><td>A<sub>geom</sub></td><td class="n">43.68</td><td>cm<sup>2</sup></td><td>geometrická plocha průřezu (nikoliv ideální)</td></tr>
          <tr><th></th><td>Smykové plochy</td><td>A<sub>y</sub></td><td class="n">11.29</td><td>cm<sup>2</sup></td><td></td></tr>
          <tr><th></th><td></td><td>A<sub>z</sub></td><td class="n">25.16</td><td>cm<sup>2</sup></td><td></td></tr>
          <tr><th></th><td>Poloha těžiště</td><td>y<sub>S,0</sub></td><td class="n">0.00</td><td>cm</td><td>vztaženo k nulovému bodu</td></tr>
        </tbody>
      </table>
      <div class="vscroll"><button aria-label="Nahoru"><svg viewBox="0 0 8 8"><path d="M.5 5.500L4 2L7.500 5.500" fill="none" stroke="#444" stroke-width="1.600"/></svg></button><span class="track"><span class="thumb"></span></span><button aria-label="Dolů"><svg viewBox="0 0 8 8"><path d="M.5 2.500L4 6L7.500 2.500" fill="none" stroke="#444" stroke-width="1.600"/></svg></button></div>
    </div>
    <div class="sheettabs"><button class="active">Průřezové charakteristiky</button><button>Statické momenty</button><button>Výsečové statické momenty</button><button>Plochy buněk</button><button>Vlastnosti stěnového nosníku</button></div>
  </section>
</main>

<footer class="status">
  <span class="msg">Pracovní rovina</span>
  <div class="modes"><button>UCHOP</button><button>RASTR</button><button>KARTEZ</button><button>OUCHOP</button><button>VLINIE</button><button>DXF</button></div>
  <div class="coords"><span class="ss">SS: Globální Y</span><span class="cy">Y:&nbsp; -106.9 mm</span><span class="cz">Z:&nbsp; 24.5 mm</span></div>
  <svg class="sizer" viewBox="0 0 12 12"><path d="M9 1H11V3H9ZM9 5H11V7H9ZM5 5H7V7H5ZM9 9H11V11H9ZM5 9H7V11H5ZM1 9H3V11H1Z" fill="#7d848f"/></svg>
</footer>
</body>
</html>
```

FILE: styles.css
```css
* { box-sizing: border-box; }
html, body { height: 100%; margin: 0; }
body {
  display: flex;
  flex-direction: column;
  min-width: 1000px;
  background: #cfd3dd;
  color: #000;
  font: 12px/16px "Noto Sans", "Open Sans", sans-serif;
  overflow: hidden;
}
button { margin: 0; padding: 0; border: 0; background: none; font: inherit; color: inherit; }
svg { display: block; }
h1, h2, p, ul, ol, dl, dd { margin: 0; padding: 0; font-weight: normal; }
ul, ol { list-style: none; }
.sprite { position: absolute; width: 0; height: 0; }

/* title */
.titlebar {
  display: flex;
  align-items: center;
  flex: 0 0 31px;
  padding: 1px 0 0 9px;
  background: linear-gradient(90deg, #6b6b6b 57%, #0078d7 57%, #0078d7 62%, #dcdcdc 62%, #dcdcdc 80%, #6b6b6b 80%) 0 0 / 100% 1px no-repeat #fff;
}
.app-icon { width: 18px; height: 18px; }
.icon-g { font: bold 10px "Liberation Serif", serif; fill: #d8a018; }
.titlebar h1 { flex: 1; padding-left: 3px; font-size: 12px; }
.winbtns { display: flex; }
.winbtns button { display: grid; place-items: center; width: 46px; height: 29px; }
.winbtns svg { width: 12px; height: 12px; }

/* menu */
.menubar { display: flex; align-items: center; flex: 0 0 24px; padding: 0 6px 0 2px; }
.bridge { width: 16px; height: 13px; margin-left: 1px; }
.menus { display: flex; flex: 1; gap: 15px; padding-left: 10px; font-size: 11px; color: #44484f; }
.mdi { display: flex; gap: 6px; padding-top: 4px; }
.mdi svg { width: 10px; height: 10px; }

/* toolbars */
.grip { flex: 0 0 8px; height: 16px; background: linear-gradient(#fff, #fff) 3px 1px / 2px 2px no-repeat, linear-gradient(#fff, #fff) 3px 5px / 2px 2px no-repeat, linear-gradient(#fff, #fff) 3px 9px / 2px 2px no-repeat, linear-gradient(#fff, #fff) 3px 13px / 2px 2px no-repeat; }
.toolrow { display: flex; flex: 0 0 26px; gap: 3px; padding-left: 2px; }
.toolbar {
  display: flex;
  align-items: center;
  height: 26px;
  padding: 1px 1px 0 0;
  border-bottom: 1px solid #b4bac6;
  border-radius: 3px;
  background: linear-gradient(#eceff8, #dfe3ee 50%, #cfd4df);
}
.toolbar.grow { flex: 1; border-radius: 3px 0 0 3px; padding-right: 0; margin-left: -1px; }
.tb { display: grid; place-items: center; flex: 0 0 22px; height: 22px; }
.tb svg { width: 16px; height: 16px; overflow: visible; }
.tb.on { border: 1px solid #c0a070; border-radius: 2px; background: linear-gradient(#fbc98a, #fdb659 50%, #ffe596); }
.tb.dim { border: 1px solid #b0b4bb; border-radius: 2px; background: #d9dce2; }
.tb.off svg { opacity: .45; }
.tb.gap { margin-left: 3px; }
.sep { flex: 0 0 8px; height: 13px; background: linear-gradient(90deg, transparent 4px, #fff 4px, #fff 5px, #c2c6d0 5px, #c2c6d0 6px, transparent 6px); }
.dd { flex: 0 0 12px; height: 4px; background: linear-gradient(#666, #666) 3px 0 / 5px 1px no-repeat, linear-gradient(#666, #666) 4px 1px / 3px 1px no-repeat, linear-gradient(#666, #666) 5px 2px / 1px 1px no-repeat; }
.combo {
  height: 19px;
  padding: 0;
  appearance: none;
  border: 1px solid #a0a0a0;
  border-radius: 0;
  background: linear-gradient(#777, #777) right 4px top 7px / 5px 1px no-repeat, linear-gradient(#777, #777) right 5px top 8px / 3px 1px no-repeat, linear-gradient(#777, #777) right 6px top 9px / 1px 1px no-repeat, #f0f0f0;
}
.c1 { width: 154px; margin: 0 2px 0 3px; }
.c2 { width: 154px; margin: 0 3px; }
.c3 { flex: 1; min-width: 40px; margin-left: 2px; border-right: 0; background: #f0f0f0; }
.xxx { font: bold 7px "Liberation Serif", serif; text-anchor: middle; }
.xx { font: 7px "Liberation Serif", serif; text-anchor: middle; }
.sub { font: 9px "Noto Sans", sans-serif; text-anchor: middle; fill: #222; }
.sub.big { font-size: 11px; }

/* work area */
.work {
  flex: 1;
  min-height: 0;
  display: grid;
  grid-template-columns: 193px minmax(0, 1fr) 155px;
  grid-template-rows: minmax(0, 1fr) 233px;
  column-gap: 5px;
  row-gap: 5px;
  padding: 1px 1px 0 1px;
}
.caption {
  display: flex;
  align-items: center;
  flex: 0 0 19px;
  gap: 8px;
  padding: 0 5px 0 3px;
  background: #b9c0cb;
  color: #474c55;
}
.caption.light { background: #dfe4ef; padding-left: 4px; border-bottom: 1px solid #b5bbc8; }
.caption h2 { flex: 1; font-size: 11px; white-space: nowrap; }
.i-pin { width: 8px; height: 10px; }
.i-x { width: 10px; height: 10px; }

/* navigator */
.navigator { grid-row: 1 / 3; display: flex; flex-direction: column; }
.treebox { flex: 1; min-height: 0; display: flex; flex-direction: column; border: solid #e4e9f5; border-width: 0 1px 0 3px; background: #fbfbf3; border-bottom: 1px solid #999; }
.tree { flex: 1; padding: 3px 0 0 7px; }
.tree ul { padding-left: 19px; }
.tree li { position: relative; }
.tree ul > li::before { content: ""; position: absolute; left: 4px; top: 0; bottom: 0; border-left: 1px dotted #888; }
.tree ul > li:last-child::before { bottom: auto; height: 9px; }
.node { display: flex; align-items: center; height: 18px; }
.exp { position: relative; width: 9px; height: 9px; border: 1px solid #999; border-radius: 1px; background: linear-gradient(#3a5fb0, #3a5fb0) 1px 3px / 5px 1px no-repeat #fff; }
.node::after { content: ""; order: 1; width: 6px; margin: 0 1px; border-top: 1px dotted #888; }
.node label { order: 2; display: flex; align-items: center; white-space: nowrap; }
.leaves .node::after { width: 10px; margin: 0 2px 0 5px; }
.node input { flex: none; appearance: none; width: 13px; height: 13px; margin: 0; border: 1px solid #555; background: #999 content-box; padding: 2px; box-shadow: inset 0 0 0 1px #fff; }
.node input[type="radio"] { border-radius: 50%; background: radial-gradient(circle at 60% 65%, #fff, #d0d8e4); box-shadow: none; }
.node input[type="radio"]:checked { background: radial-gradient(circle, #000 2px, #e8ecf2 3px); }
.node svg { width: 16px; height: 12px; margin: 0 5px 0 2px; }
.node sub { font-size: 10px; line-height: 1px; vertical-align: -2px; }
.hscroll { display: flex; align-items: center; flex: 0 0 16px; background: #f0f0f0; }
.hscroll button { display: grid; place-items: center; width: 17px; height: 16px; }
.hscroll svg, .vscroll svg { width: 8px; height: 8px; }
.hscroll .track { flex: 1; height: 15px; }
.hscroll .thumb { display: block; width: 62%; height: 15px; background: #cdcdcd; }
.navtabs { display: flex; flex: 0 0 26px; gap: 6px; padding: 0 0 5px 4px; font-size: 11px; color: #555; }
.navtabs button { display: flex; align-items: center; gap: 2px; width: 41px; }
.navtabs .active, .paneltabs .active { background: #f2f4f8; border-radius: 0 0 4px 4px; border: 1px solid #c6ecec; border-top: 0; }
.navtabs svg, .paneltabs svg { width: 16px; height: 16px; flex: none; }
.scope-blue { fill: #3d66b8; color: #3d66b8; }
.scope-dark { fill: #222; color: #222; }

/* canvas */
.canvas { position: relative; min-width: 0; margin: 0 2px 0 1px; background: #fff; border: solid #777; border-width: 1px 0 0 1px; overflow: hidden; }
.drawing { width: 100%; height: 100%; }
.note { position: absolute; left: 4px; font: 11px/14px "Liberation Sans", Arial, sans-serif; }
.note.top { top: 5px; }
.note.bottom { bottom: 5px; }
.axis { font: 10px "Liberation Sans", Arial, sans-serif; }
.green { fill: #0d0; }
.blue { fill: #00f; }
.tag { font: bold 10px "Liberation Mono", monospace; fill: #f0f; }
.tag.small { font-size: 8px; }

/* colour panel */
.panel { display: flex; flex-direction: column; }
.panelbody { flex: 1; min-height: 0; display: flex; flex-direction: column; padding: 5px 3px 4px 4px; background: #f0f0f0; border-bottom: 1px solid #8a8f99; border-left: 1px solid #c0c4cc; font-family: Roboto, "Noto Sans", sans-serif; font-size: 11px; }
.panelbody sub { font-size: 9px; line-height: 1px; }
.panelbody sup { font-size: 8px; line-height: 1px; }
.legend { display: flex; margin-top: 2px; padding: 10px 0 15px 38px; height: 215px; background: #f9f6ef; border: 1px solid; border-color: #999 #fff #fff #999; }
.bands { display: grid; grid-template-rows: repeat(11, 17px); width: 27px; height: 188px; border: 1px solid #000; border-bottom: 0; }
.bands i { border-bottom: 1px solid #000; }
.k1 { background: #b80000; } .k2 { background: #f00; } .k3 { background: #fa0; } .k4 { background: #d0d000; } .k5 { background: #ff0; } .k6 { background: #0f0; }
.k7 { background: #00e68a; } .k8 { background: #00f5f5; } .k9 { background: #09f; } .k10 { background: #00f; } .k11 { background: #0000a0; }
.scale { width: 42px; margin-top: -8px; text-align: right; }
.scale li { display: flex; align-items: center; justify-content: space-between; height: 17px; }
.scale li::before { content: ""; width: 6px; border-top: 1px solid #000; }
.extremes { display: grid; grid-template-columns: 62px 47px; row-gap: 1px; margin-top: 9px; padding: 2px 0; background: #f4f4f4; border: solid #aab0e8; border-width: 0 1px 1px 0; text-align: right; }
.extremes dt { padding-right: 1px; }
.lensbtn { display: grid; place-items: center; width: 25px; height: 21px; margin: auto 0 0 auto; border: 1px solid #adadad; background: #e1e1e1; }
.lensbtn svg { width: 16px; height: 16px; }
.paneltabs { display: flex; flex: 0 0 22px; gap: 6px; padding-left: 3px; }
.paneltabs button { display: grid; place-items: center; width: 23px; height: 20px; }

/* result tables */
.tables { grid-column: 2 / 4; display: flex; flex-direction: column; background: #f0f0f0; }
.tabletools { display: flex; align-items: center; flex: 0 0 26px; padding-left: 9px; background: linear-gradient(#eceff8, #cfd4df); }
.sheetarea { display: flex; flex: 0 0 148px; padding: 2px 3px 18px 2px; border: solid #777; border-width: 1px 0 1px 1px; font: 11px/14px "Liberation Sans", Arial, sans-serif; }
table { flex: 1; height: 128px; border-collapse: collapse; table-layout: fixed; background: #fff; }
.w0 { width: 45px; } .w1 { width: 191px; } .w2 { width: 72px; } .w3 { width: 85px; } .w4 { width: 60px; }
th, td { height: 16px; padding: 0 4px; border: 1px solid #969696; font-weight: normal; white-space: nowrap; overflow: hidden; line-height: 14px; }
td { padding: 0 4px 0 3px; }
th { background: #e1e1e1; box-shadow: inset 1px 1px #fff, inset -1px -1px #b0b0b0; }
th.cur { background: #0078d7; color: #fff; }
.letters th { height: 14px; line-height: 12px; }
.letters th[rowspan] { box-shadow: none; }
.names th { height: 33px; padding: 14px 0 0; background: #f0f0f0; box-shadow: none; }
td sub { font-size: 9px; line-height: 1px; vertical-align: -2px; }
td sup { font-size: 9px; line-height: 1px; vertical-align: 4px; padding-left: 1px; }
td.n { text-align: right; }
.vscroll { display: flex; flex-direction: column; width: 17px; }
.vscroll button { display: grid; place-items: center; height: 17px; }
.vscroll .track { flex: 1; }
.vscroll .thumb { display: block; height: 17px; margin: 0 1px; background: #cdcdcd; }
.sheettabs { display: flex; flex: 0 0 20px; border-bottom: 1px solid #d6d6d6; font: 11px/15px "Liberation Sans", Arial, sans-serif; }
.sheettabs button { height: 17px; padding: 0 3px; border: solid #555; border-width: 0 1px 1px 0; border-radius: 0 0 4px 0; background: #e1e1e1; white-space: nowrap; }
.sheettabs .active { padding-left: 4px; background: #f0f0f0; }

/* status bar */
.status { display: flex; align-items: center; flex: 0 0 21px; border-top: 1px solid #8d929b; padding: 0 1px 0 5px; background: linear-gradient(#d4d8e0, #b4bac4 50%, #a9b0bb 55%, #c3c8d1); font: 11px/16px "Liberation Sans", Arial, sans-serif; color: #222; }
.status .msg { flex: 1; }
.modes { display: flex; gap: 3px; }
.modes button { height: 18px; padding: 0 3px 0 1px; border: 1px solid; border-color: #111 #eee #eee #111; line-height: 15px; }
.coords { display: flex; justify-content: flex-end; width: 289px; white-space: nowrap; }
.coords span { border-right: 1px solid #e4e7ec; }
.ss { width: 74px; }
.cy { width: 74px; padding-left: 1px; }
.coords .cz { width: 58px; padding-left: 2px; border: 0; }
.sizer { width: 12px; height: 12px; margin: 6px 0 0 20px; }
```
